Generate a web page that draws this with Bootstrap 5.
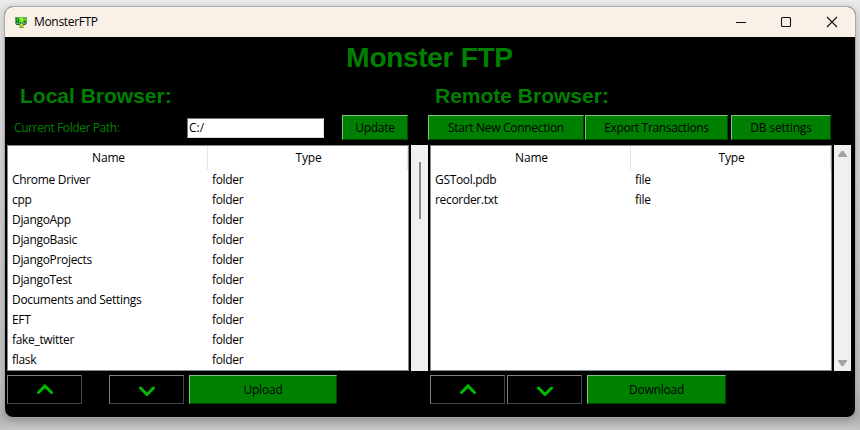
<!DOCTYPE html>
<html lang="en">
<head>
<meta charset="utf-8">
<title>MonsterFTP</title>
<meta name="viewport" content="width=device-width, initial-scale=1">
<link href="https://cdn.jsdelivr.net/npm/bootstrap@5.3.0/dist/css/bootstrap.min.css" rel="stylesheet">
<style>
body{width:860px;height:430px;overflow:hidden;padding:6px 4px 0;background:linear-gradient(#ececec 0,#e6e6e6 8px,#d4d4d4 200px,#c4c4c4 380px,#b3b3b3 418px,#c6c6c6 430px);font:12px/20px "Open Sans","Noto Sans",sans-serif;color:#000}
.win{width:852px;height:412px;border:1px solid #a9a9a9;border-radius:9px;background:#000;overflow:hidden;box-shadow:0 2px 8px rgba(0,0,0,.22)}
.titlebar{height:30px;background:#f9f1e8;padding-left:10px}
.titlebar .caption{margin-left:6px;letter-spacing:-.33px}
.winbtns{gap:33px;margin-right:17px}
.winbtns svg:last-child{margin-left:1px}
.app-title,.pane-title{font-family:"Liberation Sans",Arial,sans-serif;font-weight:700;color:green;margin:0;white-space:nowrap}
.app-title{font-size:28px;line-height:40px;height:40px;letter-spacing:-.3px;padding-top:1px;padding-right:1px}
.pane{width:423px;padding-left:2px}
.pane-title{font-size:21px;line-height:38px;height:38px}
.pane-title.local{padding-left:13px}
.pane-title.remote{padding-left:5px}
.tools{height:25px}
.tk{background:green;color:#000;border:1px solid;border-color:#80c080 #004800 #004800 #80c080;border-radius:0;padding:0;font-size:12px;line-height:1;letter-spacing:-.3px;height:25px;display:flex;align-items:center;justify-content:center;white-space:nowrap}
.tk.tall{height:29px;letter-spacing:-.2px}
.tk.arrow{background:#000;border-color:#808080 #454545 #454545 #808080;width:75px}
.tk.update{width:66px;margin-left:18px;letter-spacing:-.3px}
.tk.start{width:156px}
.tk.export{width:143px;margin-left:1px;letter-spacing:-.35px}
.tk.dbset{width:100px;margin-left:3px;letter-spacing:-.15px}
.path{width:137px;height:20px;background:#fff;border:1px solid;border-color:#777 #ddd #ddd #777;border-radius:0;padding:0 0 0 1px;font:12px "Open Sans","Noto Sans",sans-serif;color:#000}
.lbl{color:green;width:173px;margin-left:7px;letter-spacing:-.4px}
.tree{width:402px;height:226px;background:#fff;border:1px solid #828790;letter-spacing:-.32px;margin-top:5px;overflow:hidden}
.tree .head{height:24px;line-height:24px;text-align:center}
.tree .head>div{width:200px;padding-left:2px;border-right:1px solid #e5e5e5;letter-spacing:-.2px}
.tree .item{height:20px;line-height:20px;padding-left:4px}
.tree .item>div:first-child{width:200px}
.sbar{width:17px;height:226px;background:#f0f0f0;margin:5px 0 0 2px}
.sbar.arrows{padding:5px 0 4px}
.thumb{width:2px;height:57px;background:#858585;margin:17px auto 0}
.actions{margin-top:4px}
</style>
</head>
<body>
<div class="win">
  <div class="titlebar d-flex align-items-center justify-content-between">
    <div class="d-flex align-items-center">
      <svg width="13" height="13" viewBox="0 0 13 13" shape-rendering="crispEdges"><path d="M0 1h12v7H0z" fill="#6d9a78"/><path d="M1 2h10v5H1z" fill="#168a2e"/><path d="M3 1h6v1h2v3H9v2H4V5H2V3h1z" fill="#45d531"/><path d="M5 2h3v2h1v2H6V4H5z" fill="#c3df20"/><path d="M3 3h1v2H3zM8 5h2v1H8zM5 6h1v1H5z" fill="#0b7319"/><path d="M1 8h10v1H1z" fill="#3b6b46"/><path d="M4 9h5v1H8v1h1v1H4v-1h1v-1H4z" fill="#86b31b"/><path d="M5 8h3v2H5z" fill="#d0dc33"/></svg>
      <span class="caption">MonsterFTP</span>
    </div>
    <div class="winbtns d-flex align-items-center">
      <svg width="12" height="12" viewBox="0 0 12 12"><path d="M1 6.5h10" stroke="#111"/></svg>
      <svg width="12" height="12" viewBox="0 0 12 12"><rect x="1.5" y="1.500" width="9" height="9" rx="1" fill="none" stroke="#111" stroke-width="1.1"/></svg>
      <svg width="12" height="12" viewBox="0 0 12 12"><path d="M1 1l10 10M11 1L1 11" stroke="#111" stroke-width="1.1"/></svg>
    </div>
  </div>
  <h1 class="app-title text-center">Monster FTP</h1>
  <div class="d-flex">
    <section class="pane">
      <h2 class="pane-title local">Local Browser:</h2>
      <div class="tools d-flex align-items-center">
        <label class="lbl" for="path">Current Folder Path:</label>
        <input id="path" class="path" value="C:/">
        <button class="btn tk update">Update</button>
      </div>
      <div class="d-flex">
        <div class="tree">
          <div class="head d-flex"><div>Name</div><div>Type</div></div>
          <div class="item d-flex"><div>Chrome Driver</div><div>folder</div></div>
          <div class="item d-flex"><div>cpp</div><div>folder</div></div>
          <div class="item d-flex"><div>DjangoApp</div><div>folder</div></div>
          <div class="item d-flex"><div>DjangoBasic</div><div>folder</div></div>
          <div class="item d-flex"><div>DjangoProjects</div><div>folder</div></div>
          <div class="item d-flex"><div>DjangoTest</div><div>folder</div></div>
          <div class="item d-flex"><div>Documents and Settings</div><div>folder</div></div>
          <div class="item d-flex"><div>EFT</div><div>folder</div></div>
          <div class="item d-flex"><div>fake_twitter</div><div>folder</div></div>
          <div class="item d-flex"><div>flask</div><div>folder</div></div>
        </div>
        <div class="sbar d-flex align-items-start"><div class="thumb"></div></div>
      </div>
      <div class="actions d-flex">
        <button class="btn tk tall arrow" aria-label="Up"><svg width="18" height="12" viewBox="0 0 18 12"><path d="M2.500 8.500L9 2 15.500 8.500" fill="none" stroke="#00ba00" stroke-width="3" stroke-linecap="round"/></svg></button>
        <button class="btn tk tall arrow" aria-label="Down" style="margin-left:27px"><svg width="18" height="12" viewBox="0 0 18 12"><path d="M2.500 4L9 10.500 15.500 4" fill="none" stroke="#00ba00" stroke-width="3" stroke-linecap="round"/></svg></button>
        <button class="btn tk tall" style="width:148px;margin-left:5px">Upload</button>
      </div>
    </section>
    <section class="pane">
      <h2 class="pane-title remote">Remote Browser:</h2>
      <div class="tools d-flex" style="margin-left:-2px">
        <button class="btn tk start">Start New Connection</button>
        <button class="btn tk export">Export Transactions</button>
        <button class="btn tk dbset">DB settings</button>
      </div>
      <div class="d-flex">
        <div class="tree">
          <div class="head d-flex"><div>Name</div><div>Type</div></div>
          <div class="item d-flex"><div>GSTool.pdb</div><div>file</div></div>
          <div class="item d-flex"><div>recorder.txt</div><div>file</div></div>
        </div>
        <div class="sbar arrows d-flex flex-column justify-content-between align-items-center">
          <svg width="9" height="8" viewBox="0 0 9 8"><path d="M3.500 1h2L9 6v1H0V6z" fill="#a3a3a3"/></svg>
          <svg width="9" height="8" viewBox="0 0 9 8"><path d="M0 1h9v1L5.500 7h-2L0 2z" fill="#a3a3a3"/></svg>
        </div>
      </div>
      <div class="actions d-flex">
        <button class="btn tk tall arrow" aria-label="Up"><svg width="18" height="12" viewBox="0 0 18 12"><path d="M2.500 8.500L9 2 15.500 8.500" fill="none" stroke="#00ba00" stroke-width="3" stroke-linecap="round"/></svg></button>
        <button class="btn tk tall arrow" aria-label="Down" style="margin-left:2px"><svg width="18" height="12" viewBox="0 0 18 12"><path d="M2.500 4L9 10.500 15.500 4" fill="none" stroke="#00ba00" stroke-width="3" stroke-linecap="round"/></svg></button>
        <button class="btn tk tall" style="width:139px;margin-left:5px">Download</button>
      </div>
    </section>
  </div>
</div>
<script src="https://cdn.jsdelivr.net/npm/bootstrap@5.3.0/dist/js/bootstrap.bundle.min.js"></script>
</body>
</html>
